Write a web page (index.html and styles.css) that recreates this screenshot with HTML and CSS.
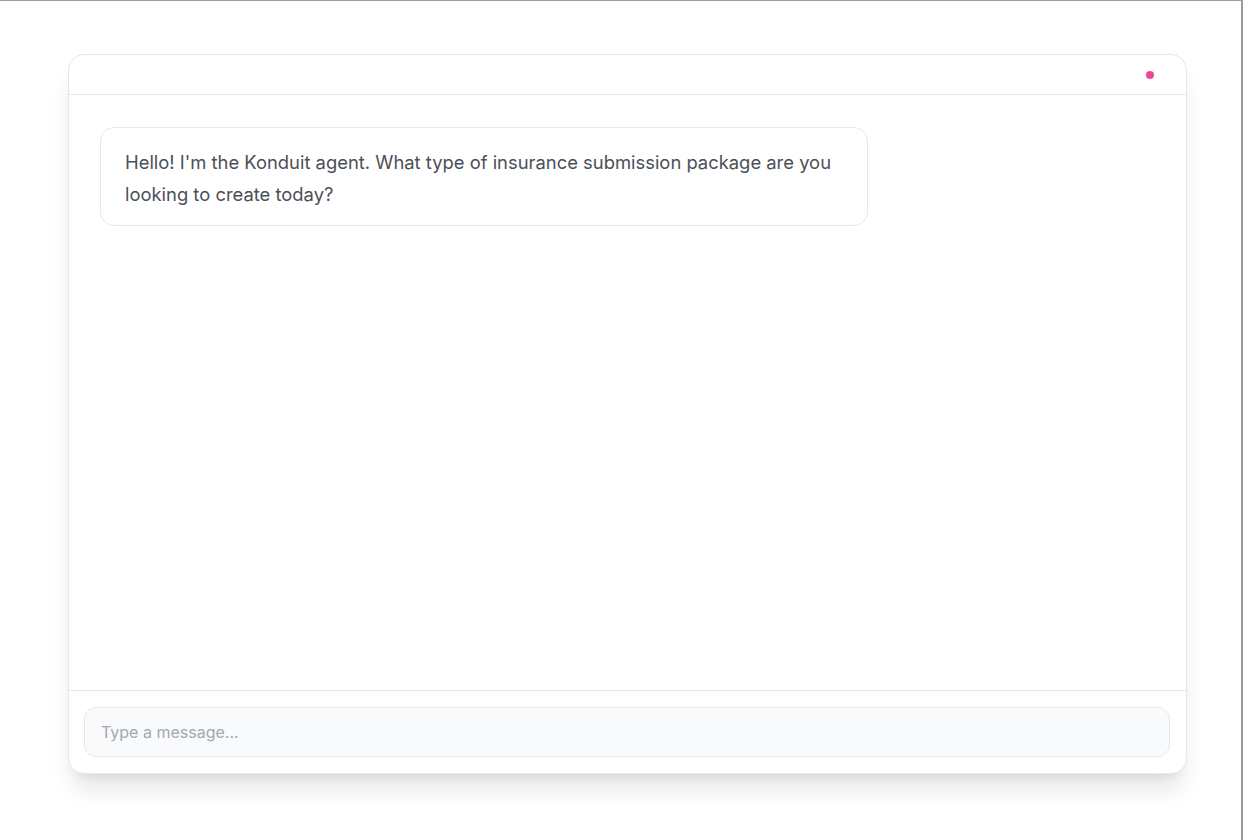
FILE: index.html
```html
<!DOCTYPE html>
<html lang="en">
<head>
<meta charset="utf-8">
<title>Konduit agent</title>
<link rel="stylesheet" href="styles.css">
</head>
<body>
<div class="frame">
  <div class="card">
    <header class="card-header">
      <span class="status-dot"></span>
    </header>
    <main class="messages">
      <div class="bubble">Hello! I'm the Konduit agent. What type of insurance submission package are you looking to create today?</div>
    </main>
    <footer class="composer">
      <input class="composer-input" type="text" placeholder="Type a message...">
    </footer>
  </div>
</div>
</body>
</html>
```
FILE: styles.css
```css
* { box-sizing: border-box; }
html, body { margin: 0; height: 100%; background: #ffffff; }
body { font-family: Inter, "Noto Sans", sans-serif; }
.frame {
  width: 1243px;
  height: 840px;
  border-top: 1px solid #9e9e9e;
  border-right: 2px solid #9a9a9a;
  padding: 53px 0 0 68px;
  background: #ffffff;
}
.card {
  width: 1119px;
  height: 720px;
  display: flex;
  flex-direction: column;
  background: #ffffff;
  border: 1px solid #e5e7eb;
  border-radius: 16px;
  box-shadow: 0 20px 25px -5px rgba(0,0,0,0.10), 0 8px 10px -6px rgba(0,0,0,0.08);
  overflow: hidden;
}
.card-header {
  height: 40px;
  flex: none;
  border-bottom: 1px solid #e5e7eb;
  display: flex;
  align-items: center;
  justify-content: flex-end;
  padding-right: 32px;
}
.status-dot {
  width: 8px;
  height: 8px;
  border-radius: 50%;
  background: #ec4899;
}
.messages {
  flex: 1;
  padding: 32px 32px 32px 31px;
}
.bubble {
  width: 768px;
  padding: 18px 24px 15px;
  border: 1px solid #e5e7eb;
  border-radius: 14px;
  font-size: 18.4px;
  line-height: 32px;
  color: #4b5058;
}
.composer {
  flex: none;
  border-top: 1px solid #e5e7eb;
  padding: 16px 16px 16px 15px;
}
.composer-input {
  display: block;
  width: 100%;
  height: 50px;
  padding: 0 16px;
  border: 1px solid #e5e7eb;
  border-radius: 12px;
  background: #f9fafb;
  font-family: Inter, "Noto Sans", sans-serif;
  font-size: 16px;
  color: #374151;
  outline: none;
}
.composer-input::placeholder { color: #a3a7ae; }
```
